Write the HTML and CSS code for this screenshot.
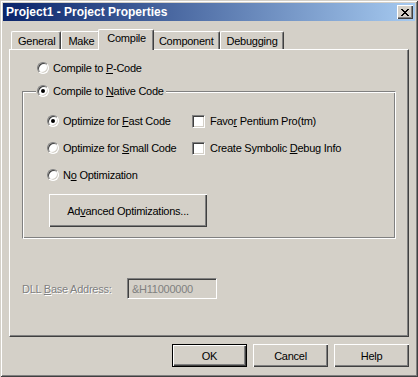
FILE: index.html
```html
<!DOCTYPE html>
<html lang="en">
<head>
  <meta charset="UTF-8" />
  <title>Project1 - Project Properties</title>
  <link rel="stylesheet" href="styles.css">
</head>
<body>
<div class="window">
  <div class="titlebar">
    <span class="title">Project1 - Project Properties</span>
    <span class="close">
      <svg width="8" height="7" viewBox="0 0 8 7" shape-rendering="crispEdges">
        <path d="M0 0h2v1h-2zM6 0h2v1h-2zM1 1h2v1h-2zM5 1h2v1h-2zM2 2h4v1h-4zM3 3h2v1h-2zM2 4h4v1h-4zM1 5h2v1h-2zM5 5h2v1h-2zM0 6h2v1h-2zM6 6h2v1h-2z" fill="#000"/>
      </svg>
    </span>
  </div>

  <div class="client">
    <div class="tabs">
      <div class="tab">General</div>
      <div class="tab">Make</div>
      <div class="tab active">Compile</div>
      <div class="tab">Component</div>
      <div class="tab">Debugging</div>
    </div>

    <div class="panel">
      <label class="opt pcode"><span class="radio"></span><span>Compile to <u>P</u>-Code</span></label>

      <fieldset class="group">
        <legend><label class="opt"><span class="radio on"></span><span>Compile to <u>N</u>ative Code</span></label></legend>
        <div class="group-body">
          <div class="opts">
            <label class="opt"><span class="radio on"></span><span>Optimize for <u>F</u>ast Code</span></label>
            <label class="opt"><span class="check"></span><span>Favo<u>r</u> Pentium Pro(tm)</span></label>
            <label class="opt"><span class="radio"></span><span>Optimize for <u>S</u>mall Code</span></label>
            <label class="opt"><span class="check"></span><span>Create Symbolic <u>D</u>ebug Info</span></label>
            <label class="opt"><span class="radio"></span><span>N<u>o</u> Optimization</span></label>
          </div>
          <button class="btn advanced">Ad<u>v</u>anced Optimizations...</button>
        </div>
      </fieldset>

      <div class="dll">
        <span class="disabled">DLL <u>B</u>ase Address:</span>
        <span class="textbox">&amp;H11000000</span>
      </div>
    </div>

    <div class="actions">
      <button class="btn default">OK</button>
      <button class="btn">Cancel</button>
      <button class="btn">Help</button>
    </div>
  </div>
</div>
</body>
</html>
```

FILE: styles.css
```css
:root { --face:#d4d0c8; --light:#fff; --shadow:#808080; --dark:#404040; }
*{box-sizing:border-box;margin:0;padding:0}
html,body{height:100%}
body{background:var(--face);font-family:"Liberation Sans",Arial,sans-serif;font-size:11px;letter-spacing:-.25px;color:#000;overflow:hidden}
u{text-decoration:underline;text-underline-offset:1px}

.window {
  width: 418px;
  height: 377px;
  padding: 3px;
  background: var(--face);
  box-shadow: inset 1px 1px var(--face), inset -1px -1px var(--dark),
              inset 2px 2px var(--light), inset -2px -2px var(--shadow);
}

.titlebar {
  height: 18px;
  display: flex;
  align-items: center;
  justify-content: space-between;
  padding: 0 2px 0 3px;
  background: linear-gradient(to right, #0a246a, #a6caf0);
}
.title{color:#fff;font-weight:bold;font-size:12px;letter-spacing:0}
.close {
  width: 16px;
  height: 14px;
  display: flex;
  align-items: center;
  justify-content: center;
  background: var(--face);
  box-shadow: inset 1px 1px var(--light), inset -1px -1px var(--dark), inset -2px -2px var(--shadow);
}

.client{padding:8px 6px 0}

.tabs{display:flex;align-items:flex-end;height:20px;padding-left:2px}
.tab {
  height: 18px;
  padding: 2px 5px 0 6px;
  line-height: 14px;
  border-top: 1px solid var(--light);
  border-left: 1px solid var(--light);
  border-right: 1px solid var(--dark);
  border-radius: 2px 2px 0 0;
  box-shadow: inset -1px 0 var(--shadow);
}
.tab.active {
  height: 21px;
  margin: 0 -2px -1px;
  padding: 1px 7px 0 8px;
  position: relative;
  z-index: 1;
  background: var(--face);
}

.panel {
  height: 288px;
  padding: 11px 12px 0;
  border: 1px solid;
  border-color: var(--light) var(--dark) var(--dark) var(--light);
  box-shadow: inset -1px -1px var(--shadow);
}

.opt{display:flex;align-items:center;gap:4px;height:14px;line-height:14px;white-space:nowrap}
.pcode{margin-left:15px}

.radio {
  position: relative;
  flex: none;
  width: 12px;
  height: 12px;
  border-radius: 50%;
  background: #fff;
  border: 1px solid;
  border-color: var(--shadow) var(--light) var(--light) var(--shadow);
  box-shadow: inset 1px 1px var(--dark), inset -1px -1px var(--face);
}
.radio.on::after{content:"";position:absolute;left:3px;top:3px;width:4px;height:4px;border-radius:50%;background:#000}

.check {
  flex: none;
  width: 13px;
  height: 13px;
  margin-right: 1px;
  background: #fff;
  border: 1px solid;
  border-color: var(--shadow) var(--light) var(--light) var(--shadow);
  box-shadow: inset 1px 1px var(--dark), inset -1px -1px var(--face);
}

.group {
  margin-top: 9px;
  border: 1px solid;
  border-color: var(--shadow) var(--light) var(--light) var(--shadow);
  box-shadow: inset 1px 1px var(--light), inset -1px -1px var(--shadow);
}
.group legend{margin-left:13px;padding:0 2px 0 1px;background:var(--face)}
.group-body{padding:16px 0 11px 24px}

.opts{display:grid;grid-template-columns:145px auto;row-gap:13px}

.btn {
  font: inherit;
  letter-spacing: inherit;
  color: #000;
  height: 23px;
  width: 75px;
  background: var(--face);
  border: 0;
  box-shadow: inset 1px 1px var(--light), inset -1px -1px var(--dark), inset -2px -2px var(--shadow);
}
.btn.advanced{display:block;width:158px;height:33px;margin:12px 0 0 2px}
.btn.default{box-shadow:inset 0 0 0 1px #000, inset 2px 2px var(--light), inset -2px -2px var(--dark), inset -3px -3px var(--shadow)}

.dll{display:flex;align-items:center;margin-top:39px;height:21px}
.disabled{color:var(--shadow);text-shadow:1px 1px var(--light);width:105px}
.textbox {
  width: 90px;
  height: 21px;
  padding: 0 4px;
  line-height: 21px;
  color: var(--shadow);
  border: 1px solid;
  border-color: var(--shadow) var(--light) var(--light) var(--shadow);
  box-shadow: inset 1px 1px var(--dark), inset -1px -1px var(--face);
}

.actions{display:flex;justify-content:flex-end;gap:6px;margin-top:7px}
```
